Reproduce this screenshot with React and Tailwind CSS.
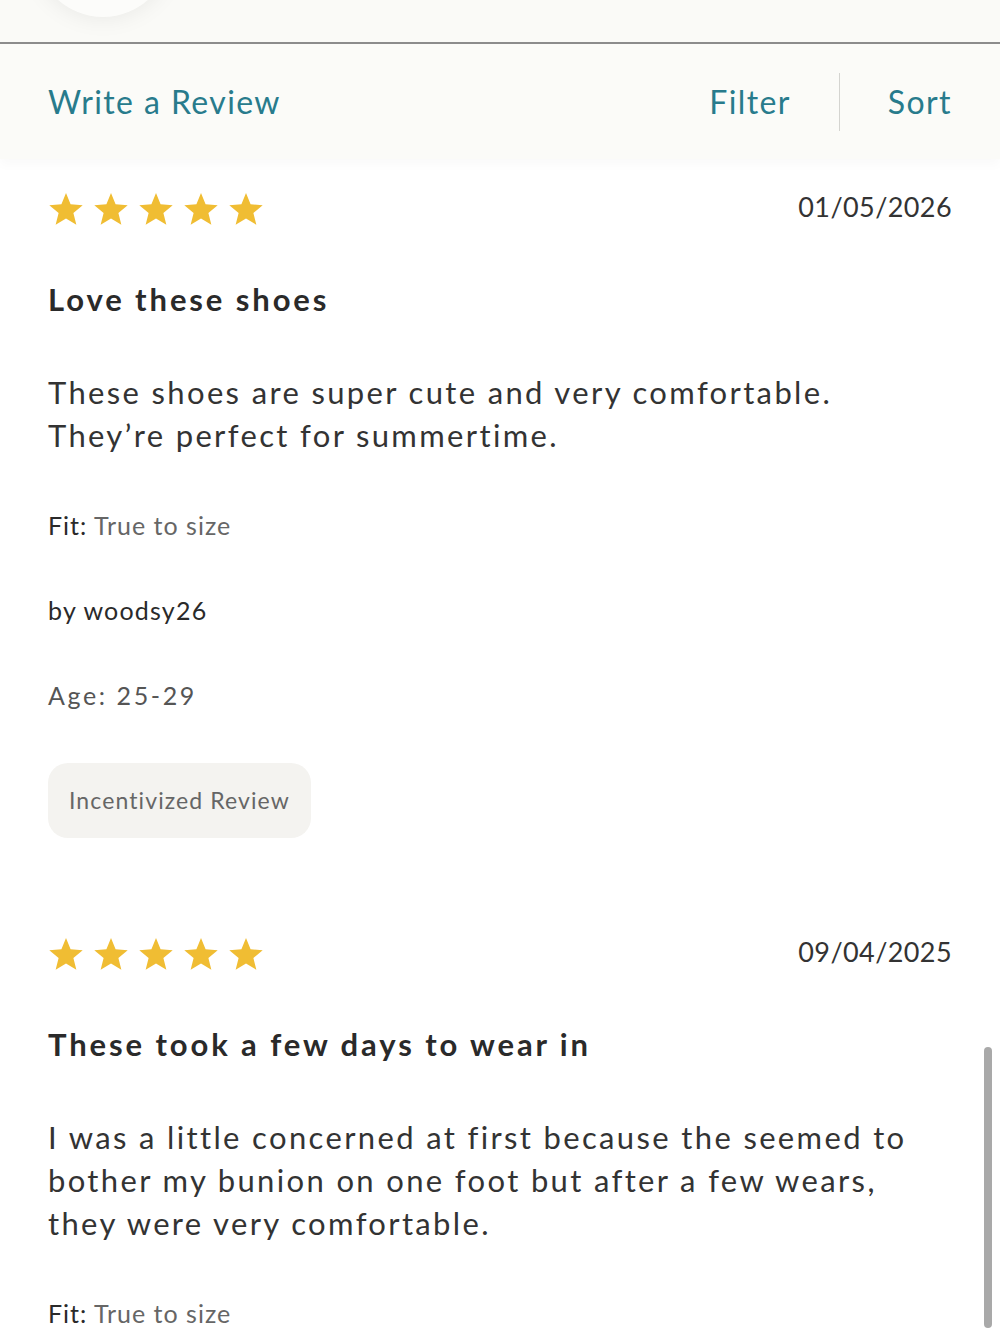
import React from 'react';

const Star = () => (
    <svg width="36" height="34" viewBox="0 0 24 23" className="block">
        <path d="M12 0.6l3.1 7.7 8.2 0.6-6.3 5.3 2 8L12 17.9l-7 4.3 2-8L0.7 8.9l8.2-0.6z" fill="#f0bd33" />
    </svg>
);

const Stars = () => (
    <div className="flex gap-[9px]">
        {[0, 1, 2, 3, 4].map((i) => <Star key={i} />)}
    </div>
);

const reviews = [
    {
        date: '01/05/2026',
        title: 'Love these shoes',
        body: ['These shoes are super cute and very comfortable.', 'They’re perfect for summertime.'],
        fit: 'True to size',
        author: 'woodsy26',
        age: '25-29',
        incentivized: true,
    },
    {
        date: '09/04/2025',
        title: 'These took a few days to wear in',
        body: [
            'I was a little concerned at first because the seemed to',
            'bother my bunion on one foot but after a few wears,',
            'they were very comfortable.',
        ],
        fit: 'True to size',
    },
];

const Review = ({ review }) => (
    <div className="pt-[33px]">
        <div className="flex justify-between items-center h-[34px]">
            <Stars />
            <span className="text-[27px] text-[#333] tracking-[0.4px] mt-[-4px]">{review.date}</span>
        </div>

        <h3 className="mt-[53px] text-[31px] leading-[40px] font-bold text-[#2a2a2a] tracking-[2.9px]">
            {review.title}
        </h3>

        <p className="mt-[52px] text-[31px] leading-[43px] text-[#333] tracking-[2.35px]">
            {review.body.map((line, i) => (
                <span key={i} className="block">{line}</span>
            ))}
        </p>

        <div className="mt-[50px] text-[25px] leading-[36px] text-[#2a2a2a] tracking-[1px]">
            Fit: <span className="text-[#666]">{review.fit}</span>
        </div>

        {review.author && (
            <div className="mt-[49px] text-[25px] leading-[36px] text-[#2a2a2a] tracking-[1.2px]">by {review.author}</div>
        )}

        {review.age && (
            <div className="mt-[49px] text-[25px] leading-[36px] text-[#555] tracking-[2.6px]">Age: {review.age}</div>
        )}

        {review.incentivized && (
            <div className="mt-[50px] inline-flex items-center h-[75px] px-[21px] rounded-[20px] bg-[#f4f3f0] text-[23px] text-[#666] tracking-[1.1px]">
                Incentivized Review
            </div>
        )}
    </div>
);

export default function App() {
    return (
        <div className="relative w-[1000px] h-[1333px] overflow-hidden bg-white" style={{ fontFamily: 'Lato, "Noto Sans", sans-serif' }}>
            {/* top strip with avatar peeking in */}
            <div className="relative h-[44px] bg-[#fafaf7] border-b-2 border-[#8c8c8c] overflow-hidden">
                <div className="absolute left-[35px] top-[-119px] w-[136px] h-[136px] rounded-full bg-[#fcfcfa] shadow-[0_0_24px_rgba(0,0,0,0.08)]" />
            </div>

            {/* actions bar */}
            <div className="h-[115px] bg-[#fbfbf8] px-12 flex items-center justify-between shadow-[0_6px_10px_rgba(0,0,0,0.025)]">
                <button className="text-[32px] text-[#287b8c] tracking-[1.4px]">Write a Review</button>
                <div className="flex items-center h-full">
                    <button className="text-[32px] text-[#287b8c] tracking-[1.4px]">Filter</button>
                    <div className="w-px h-[58px] bg-[#d4d4d0] ml-[48px] mr-[48px]" />
                    <button className="text-[32px] text-[#287b8c] tracking-[1.4px]">Sort</button>
                </div>
            </div>

            <div className="px-12">
                {reviews.map((r, i) => (
                    <div key={i} className={i > 0 ? 'mt-[66px]' : ''}>
                        <Review review={r} />
                    </div>
                ))}
            </div>

            {/* scrollbar */}
            <div className="absolute right-[8px] top-[1047px] w-[8px] h-[281px] rounded-full bg-[#a9a9a9]" />
        </div>
    );
}
